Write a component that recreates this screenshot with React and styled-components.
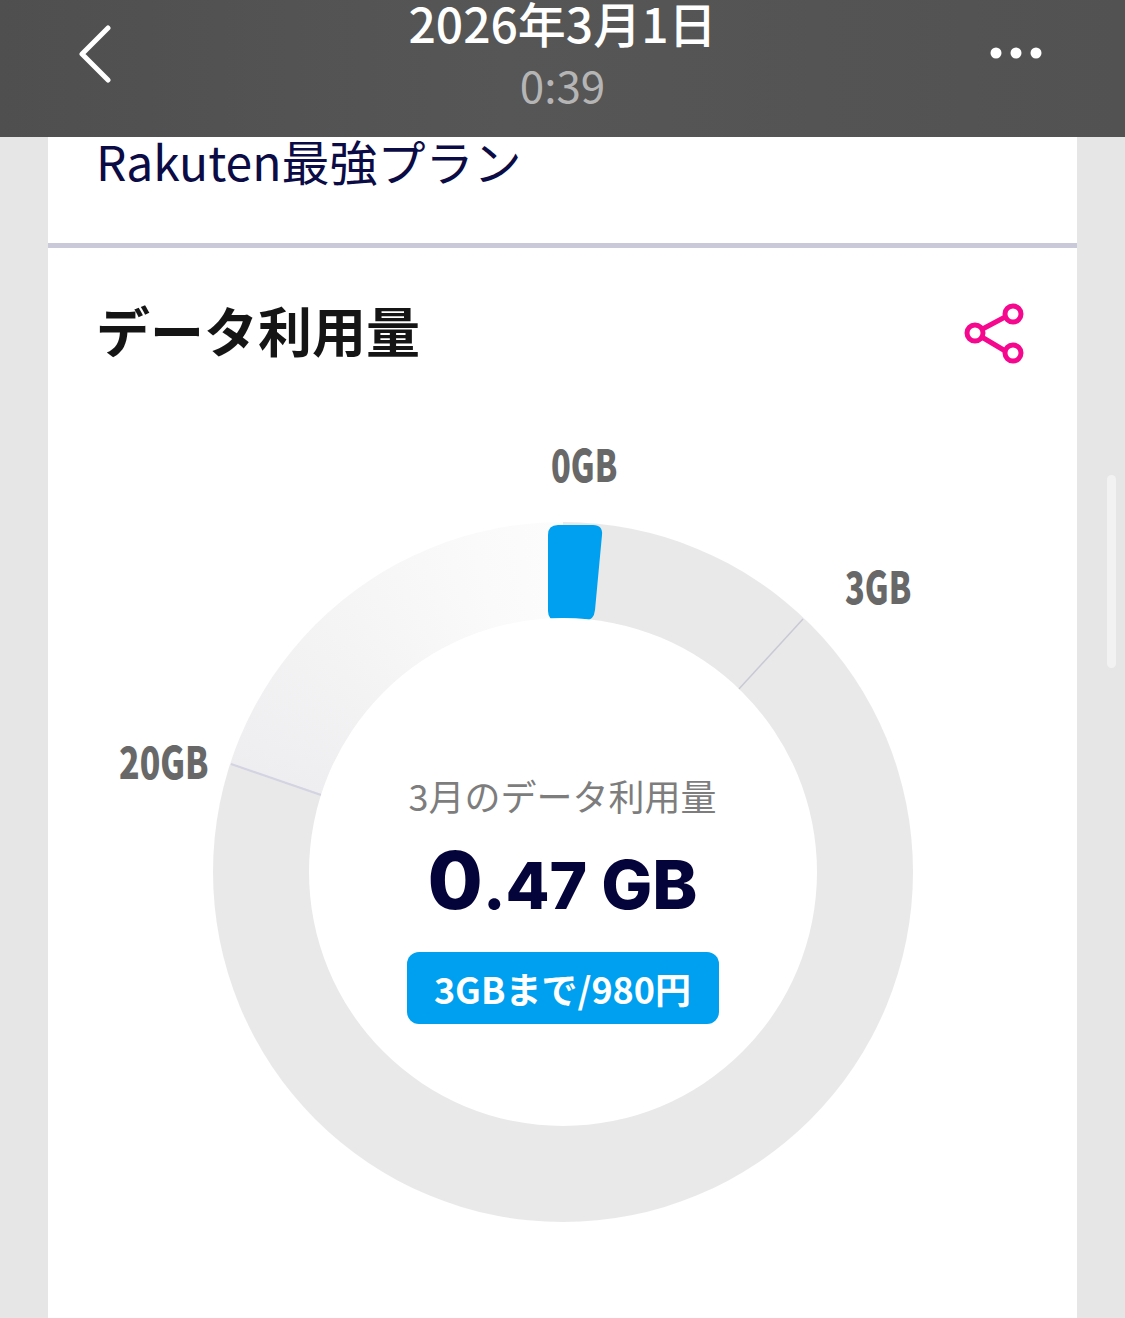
import React from "react";
import styled, { createGlobalStyle } from "styled-components";

const JP = `"Noto Sans CJK JP", "Noto Sans", sans-serif`;

const GlobalStyle = createGlobalStyle`
    html, body {
        margin: 0;
        padding: 0;
        background: #e6e6e6;
        font-family: ${JP};
    }
`;

const App = () => {
    return (
        <Page>
            <GlobalStyle />
            <Header>
                <BackButton>
                    <svg width="40" height="60" viewBox="0 0 40 60">
                        <path d="M30 5 L4 31 L30 57" fill="none" stroke="#fff" strokeWidth="5" strokeLinecap="round" strokeLinejoin="round" />
                    </svg>
                </BackButton>
                <DateBlock>
                    <DateText>2026年3月1日</DateText>
                    <TimeText>0:39</TimeText>
                </DateBlock>
                <MoreButton>
                    <svg width="56" height="14" viewBox="0 0 56 14">
                        <circle cx="8" cy="7" r="5.5" fill="#fff" />
                        <circle cx="28" cy="7" r="5.5" fill="#fff" />
                        <circle cx="48" cy="7" r="5.5" fill="#fff" />
                    </svg>
                </MoreButton>
            </Header>
            <Card>
                <PlanSection>Rakuten最強プラン</PlanSection>
                <UsageSection>
                    <TitleRow>
                        <Title>データ利用量</Title>
                        <ShareIcon width="64" height="64" viewBox="0 0 64 64">
                            <g fill="none" stroke="#f5078e" strokeWidth="5">
                                <path d="M12 30 L44 13 M12 30 L44 49" />
                                <circle cx="12" cy="30" r="8" fill="#fff" />
                                <circle cx="50" cy="11" r="8" fill="#fff" />
                                <circle cx="50" cy="50" r="8" fill="#fff" />
                            </g>
                        </ShareIcon>
                    </TitleRow>
                    <Gauge>
                        <GaugeLabel $left={503} $top={15} $scale={0.74}>0GB</GaugeLabel>
                        <GaugeLabel $left={797} $top={137} $scale={0.74}>3GB</GaugeLabel>
                        <GaugeLabel $left={71} $top={312} $scale={0.77}>20GB</GaugeLabel>
                        <Ring>
                            <Hole>
                                <MonthLabel>3月のデータ利用量</MonthLabel>
                                <Amount>
                                    <BigDigit>0</BigDigit>.47 <Unit>GB</Unit>
                                </Amount>
                                <PlanBadge>3GBまで/980円</PlanBadge>
                            </Hole>
                            <RingMarks viewBox="0 0 700 700">
                                <line x1="590" y1="97" x2="525" y2="168" stroke="#c9c9d6" strokeWidth="1.5" />
                                <line x1="18" y1="242" x2="108" y2="273" stroke="#d3d3e2" strokeWidth="2" />
                                <path
                                    d="M345 3 H380 Q390 3 389 13 L382 88 Q381 99 371 99 H345 Q335 99 335 89 V13 Q335 3 345 3 Z"
                                    fill="#00a0f0"
                                />
                            </RingMarks>
                        </Ring>
                    </Gauge>
                </UsageSection>
            </Card>
            <ScrollThumb />
        </Page>
    );
};

export default App;

const Page = styled.div`
    position: relative;
    width: 1125px;
    height: 1318px;
    overflow: hidden;
    background: #e6e6e6;
`;

const Header = styled.header`
    height: 137px;
    box-sizing: border-box;
    padding: 0 81px 0 78px;
    background: linear-gradient(90deg, #4f4f4f, #565656 45%, #525252);
    display: grid;
    grid-template-columns: 1fr auto 1fr;
    align-items: start;
`;

const BackButton = styled.div`
    height: 106px;
    display: flex;
    align-items: center;
`;

const MoreButton = styled(BackButton)`
    justify-content: flex-end;
`;

const DateBlock = styled.div`
    display: flex;
    flex-direction: column;
    align-items: center;
    margin-top: -13px;
`;

const DateText = styled.div`
    font-size: 48px;
    line-height: 70px;
    font-weight: 500;
    color: #fff;
    margin-left: 3px;
`;

const TimeText = styled.div`
    font-size: 44px;
    line-height: 44px;
    margin-top: 5px;
    margin-left: 3px;
    color: #b5b5b5;
`;

const Card = styled.main`
    width: 1029px;
    height: 1181px;
    margin: 0 48px;
    background: #fff;
    display: flex;
    flex-direction: column;
`;

const PlanSection = styled.section`
    height: 106px;
    box-sizing: content-box;
    padding-left: 48px;
    border-bottom: 5px solid #c9c9d9;
    font-size: 48px;
    line-height: 46px;
    color: #0b0b45;
`;

const UsageSection = styled.section`
    padding-top: 50px;
`;

const TitleRow = styled.div`
    display: flex;
    justify-content: space-between;
    align-items: center;
    padding: 0 50px 0 48px;
    height: 64px;
`;

const Title = styled.h2`
    margin: 0;
    font-size: 54px;
    line-height: 64px;
    font-weight: 700;
    color: #151515;
`;

const ShareIcon = styled.svg`
    margin-top: 10px;
`;

const Gauge = styled.div`
    position: relative;
    margin-top: 61px;
    padding-top: 99px;
    display: flex;
    justify-content: center;
`;

const GaugeLabel = styled.span`
    position: absolute;
    left: ${(p) => p.$left}px;
    top: ${(p) => p.$top}px;
    font-family: ${JP};
    font-size: 44px;
    line-height: 50px;
    font-weight: 900;
    color: #686868;
    transform: scaleX(${(p) => p.$scale});
    transform-origin: left center;
`;

const Ring = styled.div`
    position: relative;
    width: 700px;
    height: 700px;
    border-radius: 50%;
    background: conic-gradient(#e9e9e9 0deg 288deg, #eeeef0 288deg, #fafafa 345deg, #fcfcfc 360deg);
    display: flex;
    align-items: center;
    justify-content: center;
`;

const RingMarks = styled.svg`
    position: absolute;
    inset: 0;
    width: 700px;
    height: 700px;
`;

const Hole = styled.div`
    position: relative;
    z-index: 1;
    width: 508px;
    height: 508px;
    border-radius: 50%;
    background: #fff;
    display: flex;
    flex-direction: column;
    align-items: center;
    box-sizing: border-box;
    padding-top: 152px;
`;

const MonthLabel = styled.div`
    font-size: 36px;
    line-height: 50px;
    color: #7d7d7d;
`;

const Amount = styled.div`
    font-family: Inter, "Noto Sans", sans-serif;
    font-size: 64px;
    line-height: 90px;
    margin-top: 15px;
    font-weight: 800;
    color: #04043b;
`;

const BigDigit = styled.span`
    font-size: 80px;
`;

const Unit = styled.span`
    font-size: 68px;
`;

const PlanBadge = styled.div`
    width: 312px;
    height: 72px;
    margin-top: 21px;
    border-radius: 12px;
    background: #00a0f0;
    color: #fff;
    font-size: 36px;
    font-weight: 600;
    display: flex;
    align-items: center;
    justify-content: center;
`;

const ScrollThumb = styled.div`
    position: absolute;
    left: 1107px;
    top: 475px;
    width: 9px;
    height: 193px;
    border-radius: 5px;
    background: #f2f2f2;
`;
